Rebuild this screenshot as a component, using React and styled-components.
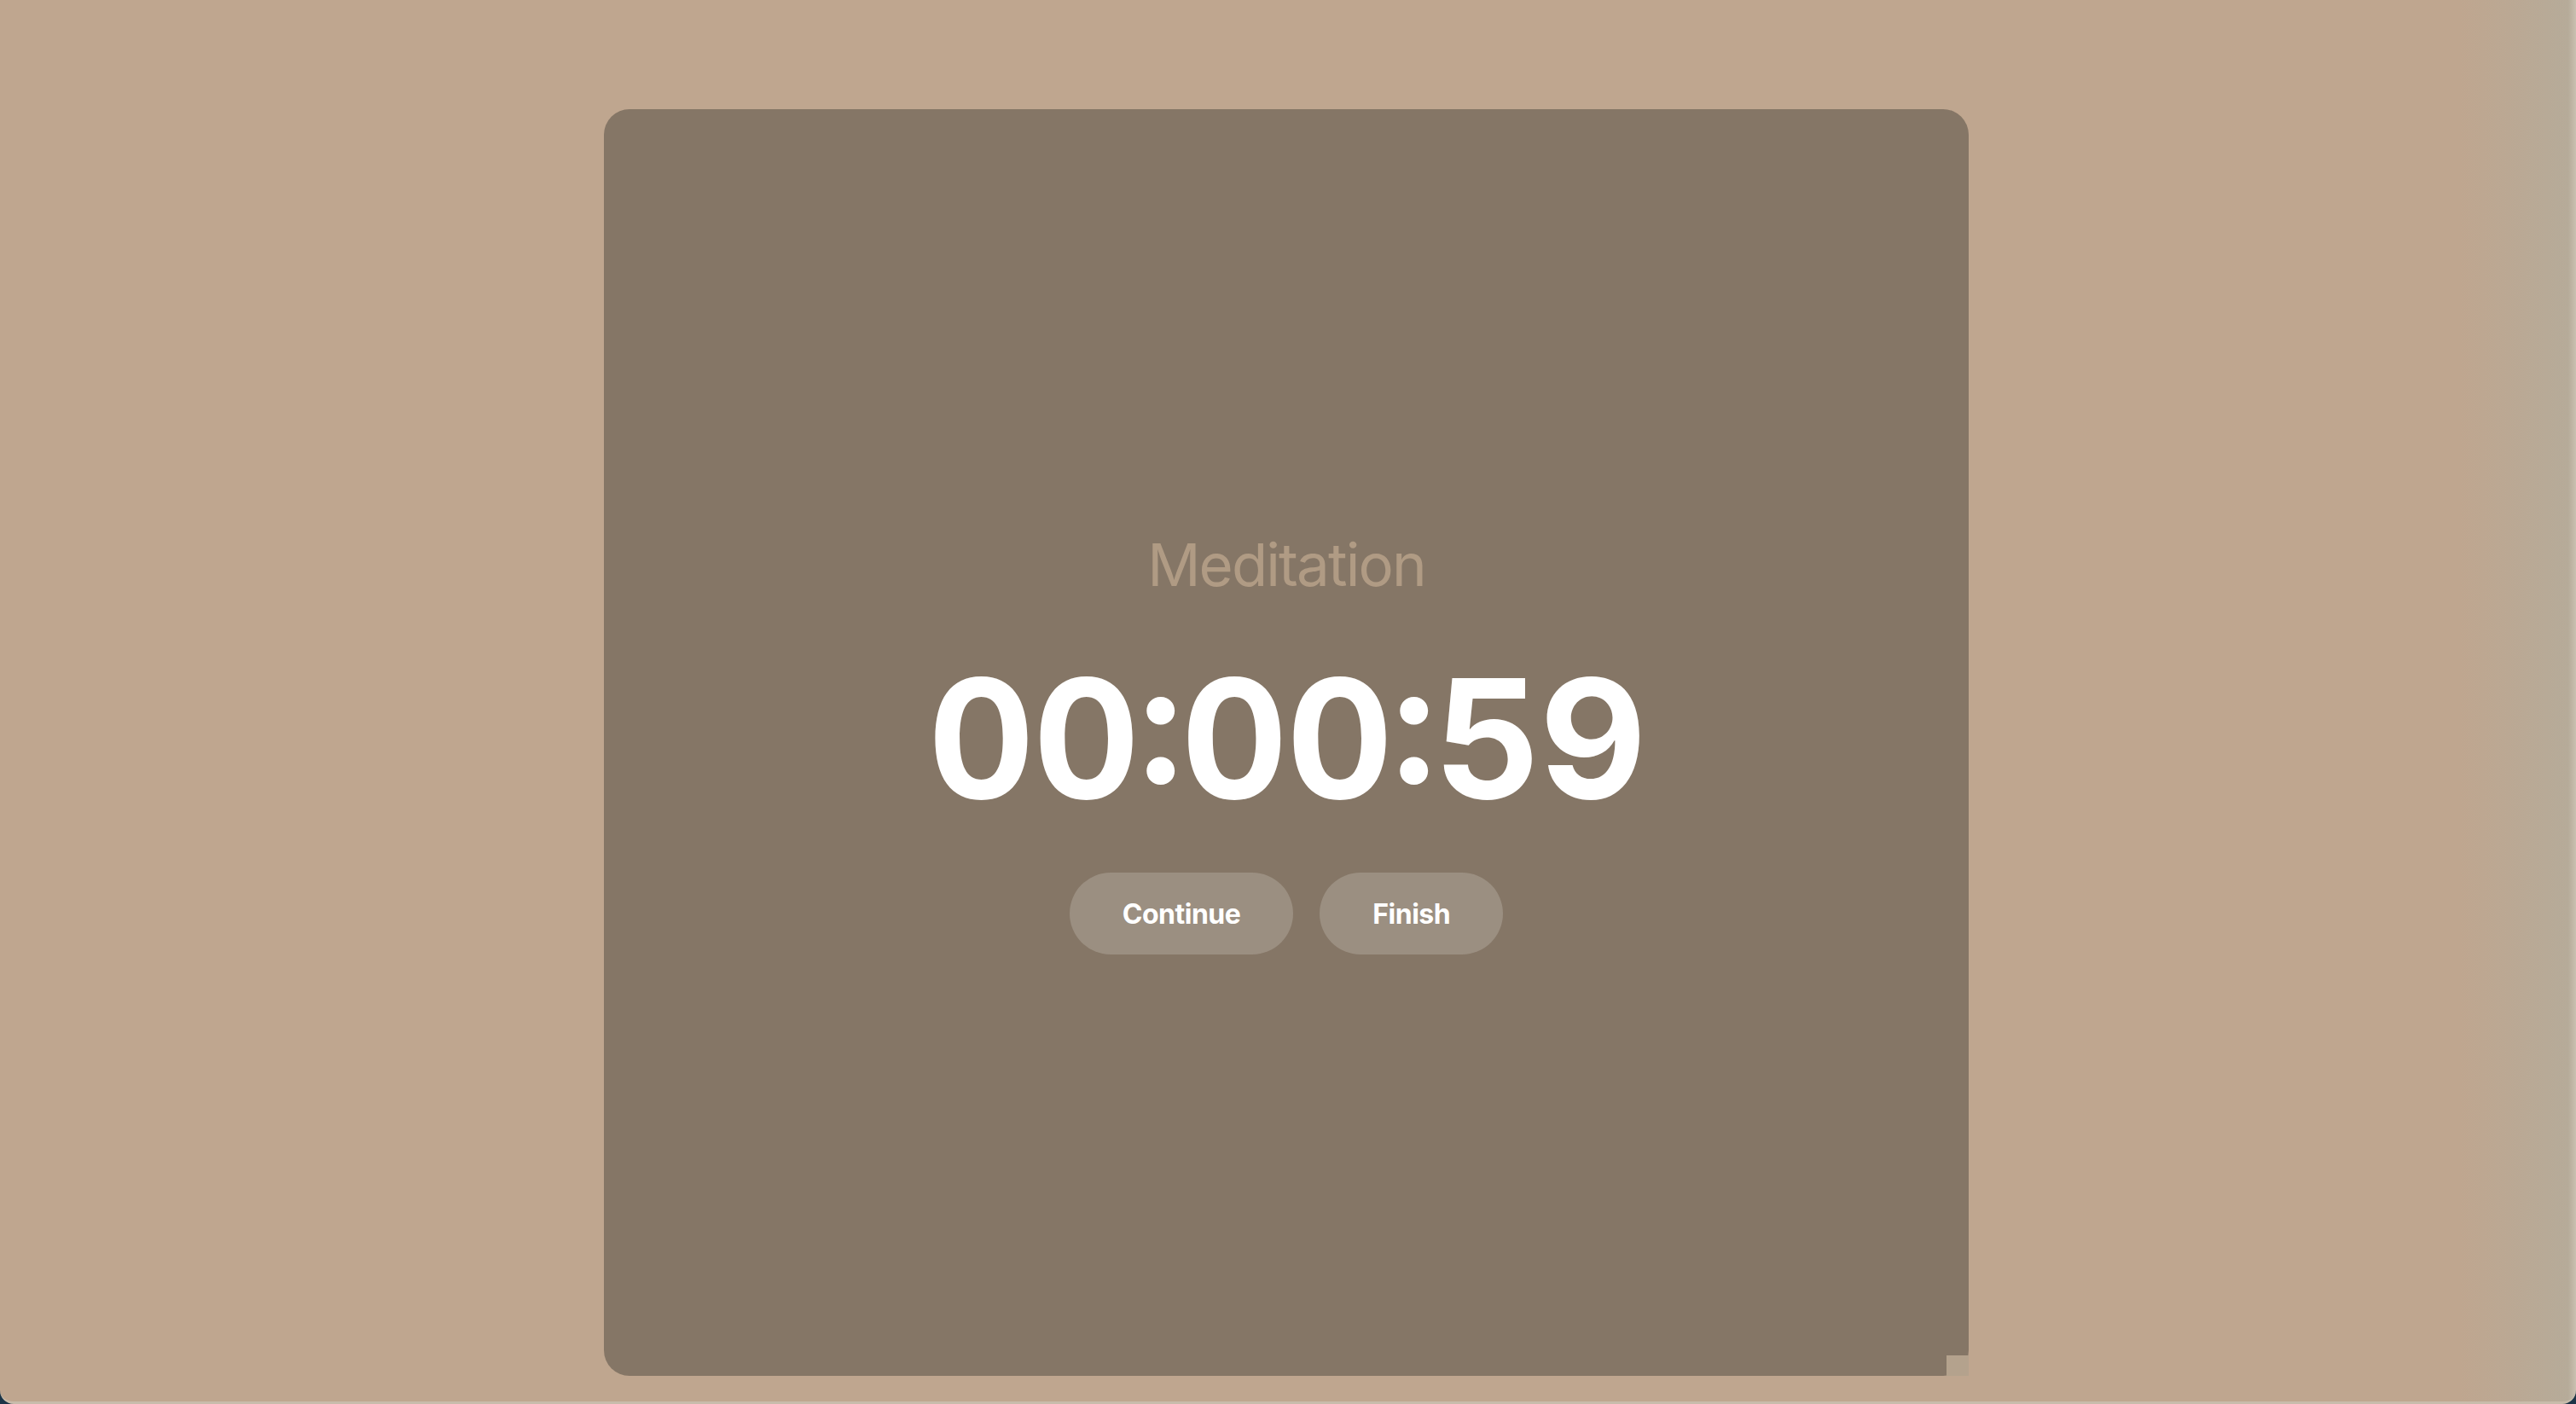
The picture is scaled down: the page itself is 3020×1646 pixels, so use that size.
import React from "react";
import styled, { createGlobalStyle } from "styled-components";

const Global = createGlobalStyle`
  html, body { margin: 0; padding: 0; background: #1c3447; }
  body { font-family: Inter, "Noto Sans", sans-serif; }
  * { box-sizing: border-box; }
`;

const Screen = styled.div`
  height: 100vh;
  display: flex;
  flex-direction: column;
  align-items: center;
  padding: 128px 4px 0 0;
  background: linear-gradient(90deg, #bfa68f 0%, #bfa68f 95.5%, #b6ab99 99.7%, #c9c0b1 100%);
  border-bottom: 3px solid #c8bcab;
  border-radius: 0 0 16px 16px;
  overflow: hidden;
`;

const Card = styled.main`
  position: relative;
  width: 1600px;
  height: 1485px;
  padding-top: 6px;
  background: #857666;
  border-radius: 30px;
  display: flex;
  flex-direction: column;
  align-items: center;
  justify-content: center;
  isolation: isolate;

  &::before {
    content: "";
    position: absolute;
    right: 0;
    bottom: 0;
    width: 26px;
    height: 24px;
    background: #b4a28d;
    z-index: -1;
  }
`;

const Title = styled.h1`
  margin: 0;
  font-family: Inter, sans-serif;
  font-weight: 400;
  font-size: 69px;
  line-height: 1;
  color: #b09b84;
  letter-spacing: -1.9px;
`;

const Timer = styled.div`
  margin-top: 72px;
  font-family: Inter, sans-serif;
  font-weight: 700;
  font-size: 194px;
  line-height: 1;
  color: #ffffff;
  font-variant-numeric: tabular-nums;
  letter-spacing: -2px;
`;

const Colon = styled.span`
  display: inline-block;
  transform: translateY(-18px);
`;

const Actions = styled.div`
  margin-top: 60px;
  display: flex;
  gap: 31px;
`;

const PillButton = styled.button`
  height: 96px;
  padding: 0 62px;
  border: none;
  border-radius: 48px;
  background: #9b8f81;
  color: #ffffff;
  font-family: Inter, sans-serif;
  font-weight: 700;
  font-size: 32px;
  letter-spacing: -0.5px;
  cursor: pointer;
`;

export default function App() {
  const parts = ["00", "00", "59"];
  return (
    <>
      <Global />
      <Screen>
        <Card>
          <Title>Meditation</Title>
          <Timer>
            {parts.map((p, i) => (
              <React.Fragment key={i}>
                {i > 0 && <Colon>:</Colon>}
                {p}
              </React.Fragment>
            ))}
          </Timer>
          <Actions>
            <PillButton>Continue</PillButton>
            <PillButton>Finish</PillButton>
          </Actions>
        </Card>
      </Screen>
    </>
  );
}
